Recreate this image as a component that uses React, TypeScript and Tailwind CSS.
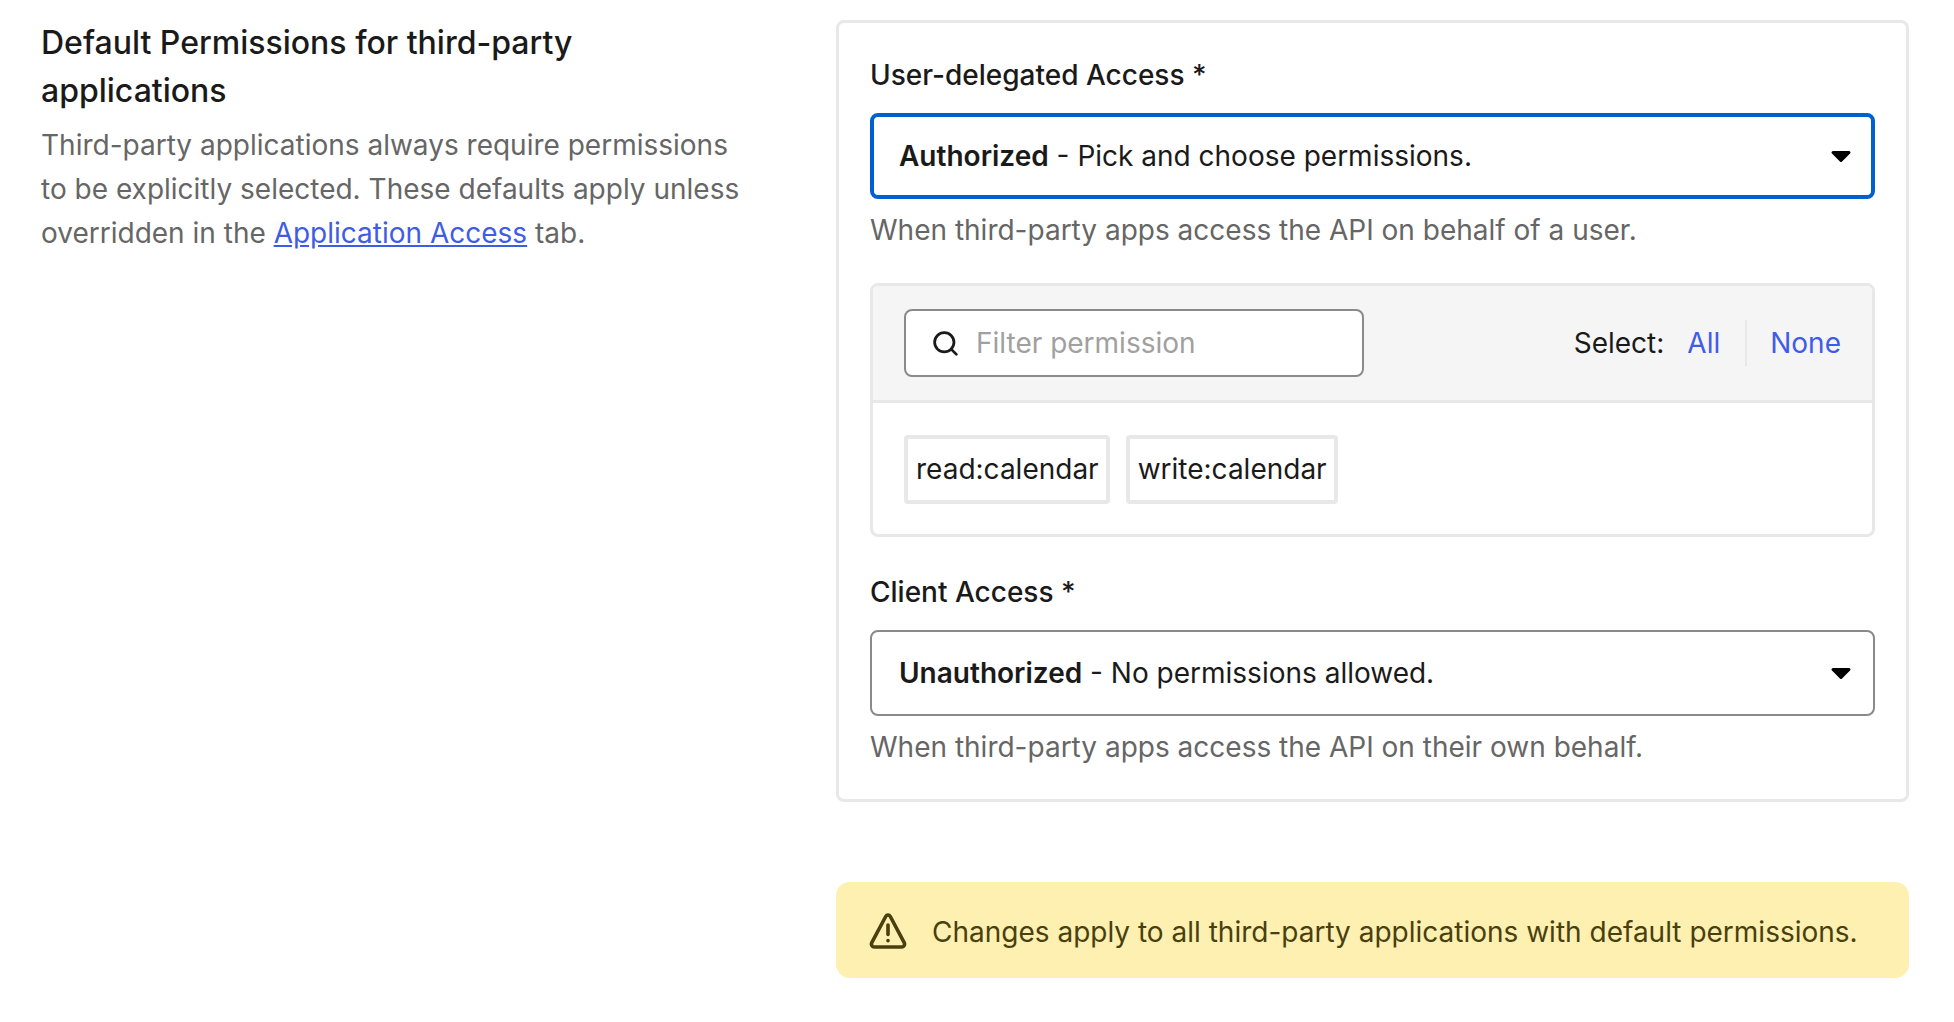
import { Search } from "lucide-react";

const Caret = () => (
  <svg width="22" height="13" viewBox="0 0 22 13" className="shrink-0">
    <path d="M3 2.5h16L11 10.5z" fill="#000" stroke="#000" strokeWidth="3" strokeLinejoin="round" />
  </svg>
);

const WarningIcon = () => (
  <svg width="38" height="37" viewBox="0 0 38 37" fill="none" stroke="#4a3f0f" strokeWidth="3.6" strokeLinecap="round" strokeLinejoin="round" className="shrink-0">
    <path d="M19 3c-1 0-1.8.6-2.3 1.5L2.8 30.6c-1 2 .3 4.4 2.6 4.4h27.2c2.3 0 3.6-2.4 2.6-4.4L21.3 4.5C20.8 3.6 20 3 19 3z" />
    <path d="M19 13v9.5" />
    <path d="M19 28.5v.3" />
  </svg>
);

type SelectProps = { title: string; desc: string; focused?: boolean };

const SelectBox = ({ title, desc, focused }: SelectProps) => (
  <div
    className={
      focused
        ? "flex h-[86px] items-center justify-between rounded-lg border-4 border-[#0060cf] pl-[25px] pr-[19px] text-[28px] text-[#1a1a1a]"
        : "flex h-[86px] items-center justify-between rounded-lg border-2 border-[#8a8a8a] pl-[27px] pr-[21px] text-[28px] text-[#1a1a1a]"
    }
  >
    <span>
      <span className="font-semibold">{title}</span> - {desc}
    </span>
    <Caret />
  </div>
);

const Chip = ({ label }: { label: string }) => (
  <span className="flex h-[69px] items-center rounded border-4 border-[#e8e8e8] pb-[1px] pl-[8px] pr-[7px] text-[28px] text-[#1a1a1a]">{label}</span>
);

export default function App() {
  return (
    <div className="flex min-h-screen items-start justify-between bg-white pl-[41px] pr-[45px] pt-[20px] font-['Inter',sans-serif] text-[28px] leading-[44px]">
      <div className="w-[700px]">
        <h2 className="-mt-[1px] text-[32px] font-medium leading-[48px] text-[#1a1a1a]">Default Permissions for third-party applications</h2>
        <p className="mt-[8px] text-[#666666]">
          Third-party applications always require permissions to be explicitly selected. These defaults apply unless overridden in the{" "}
          <a className="text-[#3f5ce8] underline">Application Access</a> tab.
        </p>
      </div>

      <div className="w-[1073px]">
        <div className="rounded-lg border-[3px] border-[#e8e8e8] px-[31px] pb-[30px] pt-[30px]">
          <div className="font-medium text-[#1a1a1a]">User-delegated Access *</div>
          <div className="mt-[16px]">
            <SelectBox title="Authorized" desc="Pick and choose permissions." focused />
          </div>
          <p className="mt-[9px] text-[#666666]">When third-party apps access the API on behalf of a user.</p>

          <div className="mt-[31px] h-[254px] rounded-lg border-[3px] border-[#e8e8e8]">
            <div className="flex h-[117px] items-center justify-between rounded-t-[5px] border-b-[3px] border-[#e8e8e8] bg-[#f5f5f5] pl-[31px] pr-[31px]">
              <div className="flex h-[68px] w-[460px] items-center gap-[16px] rounded-lg border-2 border-[#8a8a8a] bg-white pl-[25px]">
                <Search size={29} strokeWidth={2.3} className="text-[#1a1a1a]" />
                <span className="text-[#a0a0a0]">Filter permission</span>
              </div>
              <div className="flex items-center text-[#1a1a1a]">
                <span>Select:</span>
                <a className="ml-[23px] text-[#3f5ce8]">All</a>
                <span className="ml-[25px] mr-[23px] h-[46px] w-[2px] bg-[#e8e8e8]" />
                <a className="text-[#3f5ce8]">None</a>
              </div>
            </div>
            <div className="flex gap-[16px] pl-[31px] pt-[32px]">
              <Chip label="read:calendar" />
              <Chip label="write:calendar" />
            </div>
          </div>

          <div className="mt-[33px] font-medium text-[#1a1a1a]">Client Access *</div>
          <div className="mt-[16px]">
            <SelectBox title="Unauthorized" desc="No permissions allowed." />
          </div>
          <p className="mt-[9px] text-[#666666]">When third-party apps access the API on their own behalf.</p>
        </div>

        <div className="mt-[80px] flex h-[96px] items-center gap-[25px] rounded-[14px] bg-[#fdf0b0] pl-[33px] text-[#4a3f0f]">
          <WarningIcon />
          <span className="pt-[3px]">Changes apply to all third-party applications with default permissions.</span>
        </div>
      </div>
    </div>
  );
}
